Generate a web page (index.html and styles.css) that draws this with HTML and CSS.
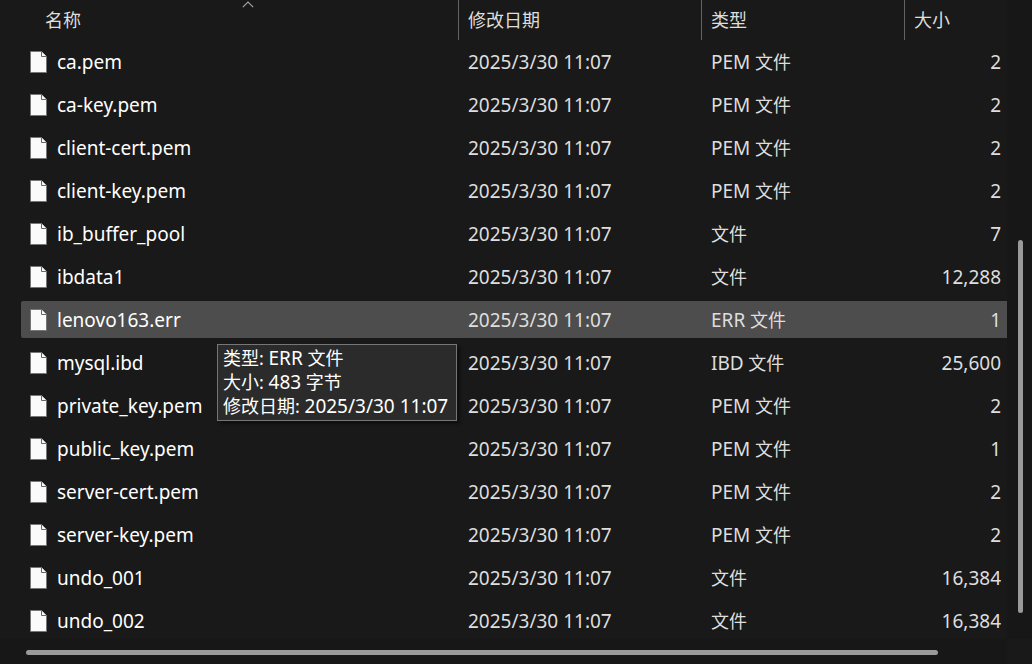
FILE: index.html
```html
<!DOCTYPE html>
<html lang="zh-CN">
<head>
    <meta charset="UTF-8">
    <meta name="viewport" content="width=device-width, initial-scale=1.0">
    <title>文件列表</title>
    <link rel="stylesheet" href="styles.css">
</head>
<body>
    <!-- shared file icon -->
    <svg class="symbols" aria-hidden="true">
        <symbol id="file" viewBox="0 0 17 22">
            <path d="M.5 .5H11.5L16.5 5.5V21.5H.5Z" fill="#fafafa" stroke="#767676"/>
            <path d="M11.5 .5V5.5H16.5" fill="#fafafa" stroke="#666"/>
        </symbol>
    </svg>
    <div class="explorer">
        <main class="list">
            <svg class="sort-arrow" viewBox="0 0 12 7" aria-hidden="true">
                <path d="M.8 6.2L6 1L11.2 6.2" fill="none" stroke="#a6a6a6" stroke-width="1.1"/>
            </svg>
            <table class="files">
                <thead>
                    <tr>
                        <th class="name" aria-sort="ascending">名称</th>
                        <th class="date">修改日期</th>
                        <th class="type">类型</th>
                        <th class="size">大小</th>
                    </tr>
                </thead>
                <tbody id="fileRows"></tbody>
            </table>
            <div class="tooltip" role="tooltip">
                <div>类型: <span class="latin">ERR</span> 文件</div>
                <div>大小: <span class="latin">483</span> 字节</div>
                <div>修改日期: <span class="latin">2025/3/30 11:07</span></div>
            </div>
        </main>
        <div class="scroll-y"><div class="thumb"></div></div>
        <div class="scroll-x"><div class="thumb"></div></div>
    </div>
    <script src="script.js"></script>
</body>
</html>
```
FILE: styles.css
```css
* {
    box-sizing: border-box;
}
body {
    margin: 0;
    background-color: #191919;
    color: #dedede;
    font-family: "Noto Sans", "Noto Sans CJK SC", sans-serif;
    font-size: 18px;
    line-height: 24px;
}
.symbols {
    display: none;
}
.explorer {
    display: grid;
    grid-template-columns: minmax(0, 1fr) 25px;
    grid-template-rows: minmax(0, 1fr) 25px;
    height: 100vh;
    overflow: hidden;
}
.list {
    position: relative;
    overflow: hidden;
    padding-left: 21px;
}
.latin {
    font-size: 19px;
}

/* table */
.files {
    width: 100%;
    table-layout: fixed;
    border-collapse: separate;
    border-spacing: 0;
}
th {
    height: 40px;
    padding: 0 0 0 9px;
    border-left: 1px solid #636363;
    font-weight: 400;
    text-align: left;
}
th.name {
    padding-left: 24px;
    border-left: none;
}
.date {
    width: 243px;
}
.type {
    width: 203px;
}
.size {
    width: 103px;
}
td {
    height: 43px;
    padding: 0 0 0 10px;
    border: solid transparent;
    border-width: 3px 0;
    background-clip: padding-box;
    white-space: nowrap;
}
td.name {
    padding-left: 9px;
    color: #fff;
}
td.size {
    padding: 0 6px 0 0;
    text-align: right;
}
.hovered td {
    background-color: #4d4d4d;
}
.hovered td.name {
    border-radius: 2px 0 0 2px / 5px 0 0 5px;
}
.file {
    display: flex;
    align-items: center;
    gap: 10px;
}
.file svg {
    width: 17px;
    height: 22px;
}
.sort-arrow {
    position: absolute;
    top: 1px;
    left: 242px;
    width: 12px;
    height: 7px;
}

/* tooltip over the rows */
.tooltip {
    position: absolute;
    top: 344px;
    left: 217px;
    padding: 1px 8px 2px 5px;
    border: 1px solid #767676;
    background-color: #2b2b2b;
    box-shadow: 3px 3px 3px rgba(0, 0, 0, 0.4);
    color: #fff;
    white-space: nowrap;
}

/* scrollbars */
.thumb {
    border-radius: 3px;
    background-color: #9a9a9a;
}
.scroll-y {
    display: grid;
    grid-template-rows: 240fr 373fr 26fr;
    background-color: #171717;
}
.scroll-y .thumb {
    grid-row: 2;
    width: 5px;
    margin-left: 11px;
}
.scroll-x {
    display: grid;
    grid-template-columns: 26fr 912fr 69fr;
    background-color: #171717;
}
.scroll-x .thumb {
    grid-column: 2;
    height: 5px;
    margin-top: 11px;
}
```
FILE: script.js
```js
const files = [
    ['ca.pem', 'PEM', '2'],
    ['ca-key.pem', 'PEM', '2'],
    ['client-cert.pem', 'PEM', '2'],
    ['client-key.pem', 'PEM', '2'],
    ['ib_buffer_pool', '', '7'],
    ['ibdata1', '', '12,288'],
    ['lenovo163.err', 'ERR', '1'],
    ['mysql.ibd', 'IBD', '25,600'],
    ['private_key.pem', 'PEM', '2'],
    ['public_key.pem', 'PEM', '1'],
    ['server-cert.pem', 'PEM', '2'],
    ['server-key.pem', 'PEM', '2'],
    ['undo_001', '', '16,384'],
    ['undo_002', '', '16,384']
];

const hovered = 'lenovo163.err';

document.getElementById('fileRows').innerHTML = files.map(([name, type, size]) => `
    <tr class="${name === hovered ? 'hovered' : ''}">
        <td class="name"><div class="file"><svg><use href="#file"/></svg><span class="latin">${name}</span></div></td>
        <td class="date"><span class="latin">2025/3/30 11:07</span></td>
        <td class="type">${type ? `<span class="latin">${type}</span> ` : ''}文件</td>
        <td class="size"><span class="latin">${size}</span></td>
    </tr>`).join('');
```
